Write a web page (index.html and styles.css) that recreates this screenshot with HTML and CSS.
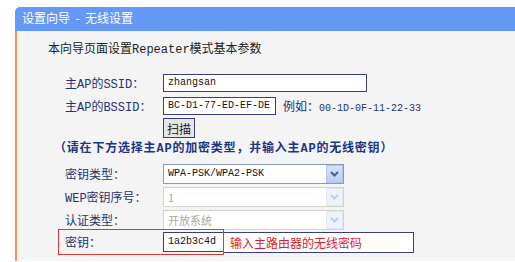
FILE: index.html
```html
<!DOCTYPE html>
<html>
<head>
<meta charset="utf-8">
<title>设置向导 - 无线设置</title>
<link rel="stylesheet" href="styles.css">
</head>
<body>

<div class="panel">
  <div class="panel-title">设置向导 &nbsp;-&nbsp; 无线设置</div>
  <div class="panel-body">
    <div class="intro">本向导页面设置Repeater模式基本参数</div>

    <div class="form">
      <div class="row row-text">
        <span class="label">主AP的SSID：</span>
        <span class="input input-ssid">zhangsan</span>
      </div>
      <div class="row row-text">
        <span class="label">主AP的BSSID：</span>
        <span class="input input-bssid">BC-D1-77-ED-EF-DE</span>
        <span class="example">例如：<span class="example-mac">00-1D-0F-11-22-33</span></span>
      </div>
      <div class="row row-button">
        <span class="label"></span>
        <button class="scan-button">扫描</button>
      </div>
      <div class="note">（请在下方选择主AP的加密类型，并输入主AP的无线密钥）</div>
      <div class="row row-select">
        <span class="label">密钥类型：</span>
        <div class="select">
          <span class="select-value">WPA-PSK/WPA2-PSK</span>
          <span class="select-arrow">
            <svg width="9" height="6" viewBox="0 0 9 6"><path d="M1 1 L4.5 4.5 L8 1" fill="none" stroke="currentColor" stroke-width="2"/></svg>
          </span>
        </div>
      </div>
      <div class="row row-select">
        <span class="label">WEP密钥序号：</span>
        <div class="select disabled">
          <span class="select-value">1</span>
          <span class="select-arrow">
            <svg width="9" height="6" viewBox="0 0 9 6"><path d="M1 1 L4.5 4.5 L8 1" fill="none" stroke="currentColor" stroke-width="2"/></svg>
          </span>
        </div>
      </div>
      <div class="row row-select">
        <span class="label">认证类型：</span>
        <div class="select disabled">
          <span class="select-value">开放系统</span>
          <span class="select-arrow">
            <svg width="9" height="6" viewBox="0 0 9 6"><path d="M1 1 L4.5 4.5 L8 1" fill="none" stroke="currentColor" stroke-width="2"/></svg>
          </span>
        </div>
      </div>
      <div class="key-row">
        <div class="key-box">
          <span class="label">密钥：</span>
          <span class="input input-key">1a2b3c4d</span>
        </div>
        <div class="hint">输入主路由器的无线密码</div>
      </div>
    </div>
  </div>
</div>

</body>
</html>
```

FILE: styles.css
```css
body, html {
  margin: 0;
  background: #fff;
  overflow: hidden;
}

body {
  font-family: "Liberation Mono", "Noto Sans CJK SC", monospace;
  font-size: 12px;
  color: #27336e;
}

.panel {
  margin: 7px 0 0 15px;
}

.panel-title {
  height: 24px;
  line-height: 22px;
  padding-left: 7px;
  background-color: #6699f5;
  border-top-left-radius: 5px;
  color: #fff;
  font-family: "Noto Sans CJK SC", sans-serif;
  font-size: 12px;
}

.panel-body {
  background-color: #f4f4f4;
  border-left: 2px solid #f0915a;
  padding: 11px 0 6px 31px;
}

.intro {
  height: 16px;
  line-height: 16px;
  color: #222;
}

.form {
  margin-top: 13px;
  padding-left: 10px;
}

.row {
  display: flex;
  align-items: center;
  padding-left: 7px;
}

.row-text {
  height: 23px;
}

.row-button {
  height: 22px;
}

.row-select {
  height: 23px;
}

.label {
  width: 98px;
  flex: none;
}

.input {
  box-sizing: border-box;
  height: 18px;
  line-height: 16px;
  padding-left: 4px;
  background: #fff;
  border: 1px solid #3a3d7c;
  font-size: 10px;
  color: #111;
}

.input-ssid {
  width: 204px;
}

.input-bssid {
  width: 113px;
}

.example {
  margin-left: 7px;
  font-family: "Noto Sans CJK SC", sans-serif;
}

.example-mac {
  font-family: "Liberation Mono", monospace;
  font-size: 10px;
}

.scan-button {
  height: 20px;
  padding: 0 3px;
  margin: 0;
  background: #e6e6e6;
  border: 1px solid #3a3d7c;
  font-family: "Noto Sans CJK SC", sans-serif;
  font-size: 12px;
  color: #222;
  cursor: pointer;
}

.note {
  height: 23px;
  line-height: 20px;
  margin-left: -4px;
  letter-spacing: 0.8px;
  font-weight: bold;
  color: #1d3585;
}

.select {
  box-sizing: border-box;
  width: 181px;
  height: 20px;
  display: flex;
  align-items: center;
  background: #fff;
  border: 1px solid #8a9ab5;
}

.select-value {
  flex: 1;
  padding-left: 4px;
  font-size: 10px;
  color: #111;
}

.select-arrow {
  box-sizing: border-box;
  width: 17px;
  height: 18px;
  display: flex;
  align-items: center;
  justify-content: center;
  background: linear-gradient(#d6e2fb, #b9cdf5);
  border: 1px solid #b2c3e6;
  color: #4c5d85;
}

.select.disabled {
  border-color: #d5d3c8;
}

.select.disabled .select-value {
  color: #a8a8a8;
  font-family: "Noto Sans CJK SC", sans-serif;
  font-size: 11px;
}

.select.disabled .select-arrow {
  background: #eef2fa;
  border-color: #e2e8f3;
  color: #c5cde0;
}

.key-row {
  display: flex;
  align-items: center;
  margin-top: -2px;
}

.key-box {
  box-sizing: border-box;
  height: 26px;
  width: 166px;
  display: flex;
  align-items: center;
  padding-left: 6px;
  border: 1px solid #d83a3a;
}

.input-key {
  height: 20px;
  line-height: 18px;
  width: 60px;
  border-right: none;
}

.hint {
  box-sizing: border-box;
  width: 190px;
  height: 21px;
  line-height: 19px;
  padding-left: 6px;
  background: #fff;
  border: 1px solid #3a3d7c;
  border-left: none;
  font-family: "Noto Sans CJK SC", sans-serif;
  color: #e3202c;
}
```
